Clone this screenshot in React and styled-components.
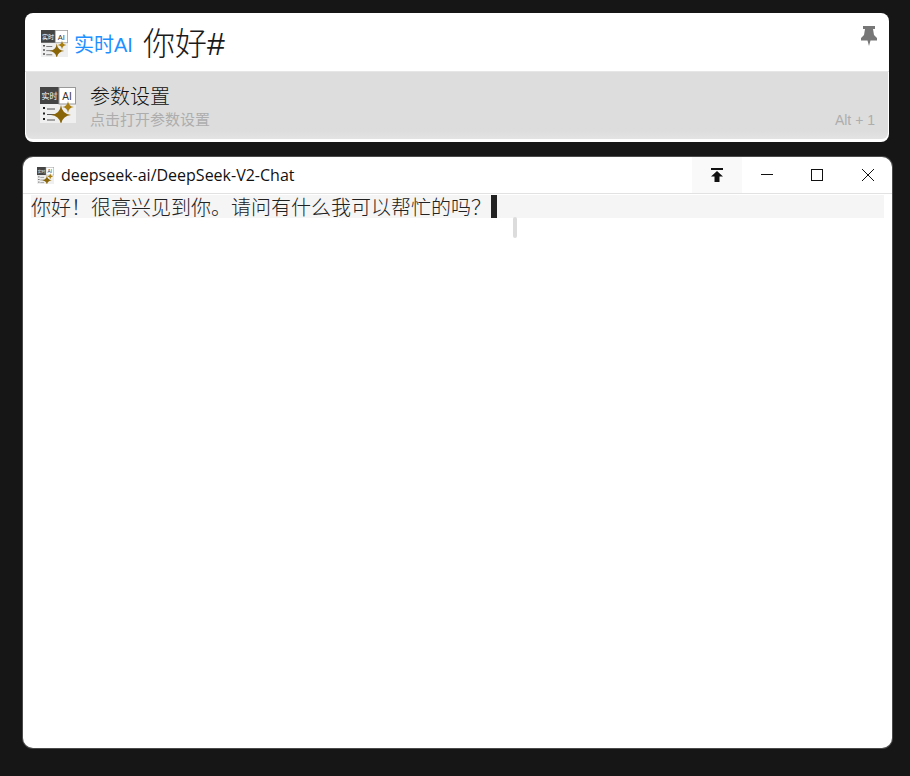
import React from "react";
import styled, { createGlobalStyle } from "styled-components";

const Global = createGlobalStyle`
  html, body {
    margin: 0;
    padding: 0;
    height: 100%;
    background: #161616;
    font-family: "Open Sans", "Noto Sans CJK SC", sans-serif;
  }
  #root { height: 100%; }
`;

const Page = styled.div`
  height: 776px;
  box-sizing: border-box;
  padding: 13px 18px 28px 23px;
  display: flex;
  flex-direction: column;
  gap: 15px;
  overflow: hidden;
`;

const Launcher = styled.div`
  position: relative;
  margin: 0 3px 0 2px;
  height: 129px;
  box-sizing: border-box;
  padding-bottom: 3px;
  background: #fff;
  border-radius: 8px;
  overflow: hidden;
  display: flex;
  flex-direction: column;
`;

const SearchRow = styled.div`
  height: 59px;
  flex: none;
  box-sizing: border-box;
  padding: 3px 0 0 16px;
  display: flex;
  align-items: center;
  border-bottom: 1px solid #e6e6e6;
`;

const Plugin = styled.span`
  margin-left: 6px;
  font-family: "Liberation Sans", "Noto Sans CJK SC", sans-serif;
  font-size: 20px;
  color: #1e90ff;
`;

const Query = styled.span`
  margin-left: 10px;
  font-size: 32px;
  line-height: 40px;
  font-weight: 300;
  color: #1a1a1a;
  font-family: "Liberation Sans", "Noto Sans CJK SC", sans-serif;
`;

const PinButton = styled.div`
  position: absolute;
  top: 13px;
  right: 12px;
  width: 16px;
  height: 20px;
  color: #777;
`;

const Result = styled.div`
  flex: 1;
  margin: 0 1px;
  background: linear-gradient(#dddddd 88%, #e3e3e3);
  border-radius: 0 0 6px 6px;
  display: flex;
  align-items: center;
  padding: 0 13px 2px 14px;
`;

const ResultText = styled.div`
  margin-left: 14px;
  flex: 1;
  display: flex;
  flex-direction: column;
  padding-top: 3px;
`;

const ResultTitle = styled.div`
  font-size: 20px;
  line-height: 26px;
  font-weight: 300;
  color: #111;
  font-family: "Noto Sans CJK SC", sans-serif;
`;

const ResultSub = styled.div`
  font-size: 15px;
  line-height: 20px;
  color: #adadad;
  font-family: "Noto Sans CJK SC", sans-serif;
`;

const Shortcut = styled.div`
  align-self: flex-end;
  margin-bottom: 9px;
  font-family: "Liberation Sans", sans-serif;
  font-size: 14px;
  color: #adadad;
`;

const Window = styled.div`
  position: relative;
  flex: 1;
  background: #fff;
  border-radius: 10px;
  box-shadow: 0 0 0 1px #4a4a4a;
  overflow: hidden;
  display: flex;
  flex-direction: column;
`;

const TitleBar = styled.div`
  height: 37px;
  flex: none;
  box-sizing: border-box;
  border-bottom: 1px solid #e2e2e2;
  display: flex;
  align-items: stretch;
`;

const TitleInfo = styled.div`
  flex: 1;
  display: flex;
  align-items: center;
  padding-left: 14px;
  gap: 7px;
`;

const TitleText = styled.span`
  font-size: 16px;
  color: #111;
`;

const WinButton = styled.div`
  width: 50px;
  display: flex;
  align-items: center;
  justify-content: center;
  color: #111;
  background: ${(p) => (p.$active ? "#f9f9f9" : "transparent")};
`;

const Line = styled.div`
  margin: 1px 8px 0;
  height: 23px;
  background: #f5f5f5;
  display: flex;
  align-items: center;
`;

const Message = styled.span`
  font-family: "Noto Sans CJK SC", sans-serif;
  font-size: 20px;
  line-height: 23px;
  font-weight: 300;
  color: #222;
  white-space: nowrap;
`;

const Cursor = styled.span`
  width: 6px;
  height: 23px;
  background: #222;
`;

const ScrollThumb = styled.div`
  position: absolute;
  left: 490px;
  top: 60px;
  width: 4px;
  height: 21px;
  border-radius: 2px;
  background: #dcdcdc;
`;

const AppIcon = ({ size }) => (
  <svg width={size} height={size} viewBox="0 0 36 36">
    <rect x="0" y="0" width="36" height="36" fill="#efefef" />
    <rect x="0" y="0" width="19" height="17" fill="#444" />
    <rect x="19" y="0.5" width="16.5" height="16.5" fill="#fff" stroke="#999" />
    <text x="9.5" y="12" fontSize="8" fontFamily="Noto Sans CJK SC" fill="#fff" textAnchor="middle">实时</text>
    <text x="27" y="13" fontSize="10" fontFamily="Liberation Sans" fill="#333" textAnchor="middle">AI</text>
    <path d="M3 21h2M3 26.5h2M3 32h2" stroke="#222" strokeWidth="2" />
    <path d="M7 22h8M7 27.5h8M7 33h8" stroke="#555" strokeWidth="1" />
    <path d="M21 18 Q22 27 31 28 Q22 29 21 38 Q20 29 11 28 Q20 27 21 18Z" fill="#8a6508" />
    <path d="M28 14 Q28.6 19.4 34 20 Q28.6 20.6 28 26 Q27.4 20.6 22 20 Q27.4 19.4 28 14Z" fill="#a97f12" />
  </svg>
);

export default function App() {
  return (
    <Page>
      <Global />
      <Launcher>
        <SearchRow>
          <AppIcon size={27} />
          <Plugin>实时AI</Plugin>
          <Query>你好#</Query>
        </SearchRow>
        <PinButton>
          <svg width="16" height="20" viewBox="0 0 16 20" fill="currentColor">
            <path d="M2 0h12v3h-2l1 6 3 3v2.5H9.5L8 20l-1.5-5.5H0V12l3-3 1-6H2z" />
          </svg>
        </PinButton>
        <Result>
          <AppIcon size={36} />
          <ResultText>
            <ResultTitle>参数设置</ResultTitle>
            <ResultSub>点击打开参数设置</ResultSub>
          </ResultText>
          <Shortcut>Alt + 1</Shortcut>
        </Result>
      </Launcher>
      <Window>
        <TitleBar>
          <TitleInfo>
            <AppIcon size={17} />
            <TitleText>deepseek-ai/DeepSeek-V2-Chat</TitleText>
          </TitleInfo>
          <WinButton $active>
            <svg width="14" height="14" viewBox="0 0 14 14" fill="currentColor">
              <path d="M1 0h12v2H1zM7 3l6 5.5H9.5V14h-5V8.500H1z" />
            </svg>
          </WinButton>
          <WinButton>
            <svg width="14" height="14" viewBox="0 0 14 14" stroke="currentColor" fill="none">
              <path d="M1 6.500h12" />
            </svg>
          </WinButton>
          <WinButton>
            <svg width="12" height="12" viewBox="0 0 12 12" stroke="currentColor" fill="none">
              <rect x="0.5" y="0.5" width="11" height="11" />
            </svg>
          </WinButton>
          <WinButton>
            <svg width="16" height="14" viewBox="0 0 16 14" stroke="currentColor" fill="none">
              <path d="M3 1l12 12M15 1L3 13" />
            </svg>
          </WinButton>
        </TitleBar>
        <Line>
          <Message>你好！很高兴见到你。请问有什么我可以帮忙的吗？</Message>
          <Cursor />
        </Line>
        <ScrollThumb />
      </Window>
    </Page>
  );
}
